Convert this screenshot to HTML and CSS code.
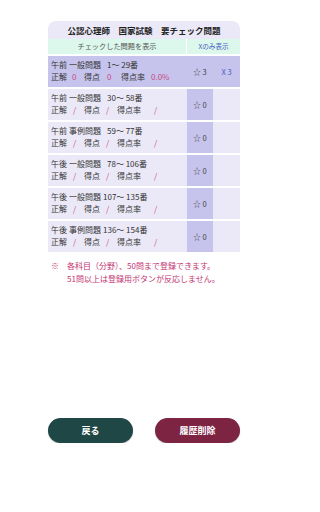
FILE: index.html
```html
<!DOCTYPE html>
<html lang="ja">
<head>
<meta charset="utf-8">
<link rel="stylesheet" href="styles.css">
</head>
<body>
<div class="screen">
<div class="page">
  <div class="card">
    <div class="title">公認心理師　国家試験　要チェック問題</div>
    <div class="head">
      <div class="head-main">チェックした問題を表示</div>
      <div class="head-x">Xのみ表示</div>
    </div>
    <div class="row active">
      <div class="main">
        <div class="l1"><span class="w1">午前</span><span class="w2">一般問題</span><span class="rng">1〜 29番</span></div>
        <div class="l2 done"><span class="a">正解</span><span class="b v">0</span><span class="c">得点</span><span class="d v">0</span><span class="e">得点率</span><span class="v">0.0%</span></div>
      </div>
      <div class="star">☆&nbsp;3</div>
      <div class="xc">X&nbsp;3</div>
    </div>
    <div class="row">
      <div class="main">
        <div class="l1"><span class="w1">午前</span><span class="w2">一般問題</span><span class="rng">30〜 58番</span></div>
        <div class="l2"><span class="a">正解</span><span class="b v">/</span><span class="c">得点</span><span class="d v">/</span><span class="e">得点率</span><span class="v">/</span></div>
      </div>
      <div class="star">☆&nbsp;0</div>
      <div class="xc"></div>
    </div>
    <div class="row">
      <div class="main">
        <div class="l1"><span class="w1">午前</span><span class="w2">事例問題</span><span class="rng">59〜 77番</span></div>
        <div class="l2"><span class="a">正解</span><span class="b v">/</span><span class="c">得点</span><span class="d v">/</span><span class="e">得点率</span><span class="v">/</span></div>
      </div>
      <div class="star">☆&nbsp;0</div>
      <div class="xc"></div>
    </div>
    <div class="row">
      <div class="main">
        <div class="l1"><span class="w1">午後</span><span class="w2">一般問題</span><span class="rng">78〜 106番</span></div>
        <div class="l2"><span class="a">正解</span><span class="b v">/</span><span class="c">得点</span><span class="d v">/</span><span class="e">得点率</span><span class="v">/</span></div>
      </div>
      <div class="star">☆&nbsp;0</div>
      <div class="xc"></div>
    </div>
    <div class="row">
      <div class="main">
        <div class="l1"><span class="w1">午後</span><span class="w2">一般問題</span><span class="rng tight">107〜 135番</span></div>
        <div class="l2"><span class="a">正解</span><span class="b v">/</span><span class="c">得点</span><span class="d v">/</span><span class="e">得点率</span><span class="v">/</span></div>
      </div>
      <div class="star">☆&nbsp;0</div>
      <div class="xc"></div>
    </div>
    <div class="row">
      <div class="main">
        <div class="l1"><span class="w1">午後</span><span class="w2">事例問題</span><span class="rng tight">136〜 154番</span></div>
        <div class="l2"><span class="a">正解</span><span class="b v">/</span><span class="c">得点</span><span class="d v">/</span><span class="e">得点率</span><span class="v">/</span></div>
      </div>
      <div class="star">☆&nbsp;0</div>
      <div class="xc"></div>
    </div>
  </div>
  <div class="note">
    <div class="nl"><span class="mark">※</span><span>各科目（分野）、50問まで登録できます。</span></div>
    <div class="nl"><span class="mark"></span><span>51問以上は登録用ボタンが反応しません。</span></div>
  </div>
  <div class="buttons">
    <button class="btn back">戻る</button>
    <button class="btn del">履歴削除</button>
  </div>
</div>
</div>
</body>
</html>
```
FILE: styles.css
```css
html, body {
  margin: 0;
  padding: 0;
  background: #ffffff;
}
body {
  font-family: "Noto Sans CJK JP", "Noto Sans", sans-serif;
  color: #333333;
}
.screen {
  width: 288px;
}
.page {
  width: 192px;
  margin: 0 auto;
  padding-top: 21px;
}
.card {
  display: flex;
  flex-direction: column;
  gap: 2px;
}
.title {
  background: #ebe9f8;
  border-radius: 8px 8px 0 0;
  height: 18px;
  line-height: 18px;
  text-align: center;
  font-size: 8.5px;
  font-weight: bold;
  color: #222;
  margin-bottom: -2px;
}
.head {
  display: flex;
  height: 15px;
  line-height: 15px;
  gap: 1px;
  color: #555;
}
.head-main {
  width: 138px;
  background: #dcf7ec;
  text-align: center;
  font-size: 7.2px;
}
.head-x {
  flex: 1;
  background: #dcf7ec;
  text-align: center;
  font-size: 6.6px;
  color: #4b5fc0;
}
.row {
  display: flex;
  height: 31px;
  background: #ebe9f8;
}
.row.active {
  background: #c6c4ec;
}
.main {
  width: 139px;
  padding-left: 3px;
  padding-top: 3px;
  box-sizing: border-box;
  font-size: 8px;
  line-height: 12px;
  white-space: nowrap;
}
.l1 .w1 {
  margin-right: 2px;
}
.rng {
  margin-left: 6px;
}
.rng.tight {
  margin-left: 2px;
}
.l2 span {
  display: inline-block;
}
.l2 .a { width: 22px; }
.l2 .b { width: 11px; }
.l2 .c { width: 22px; }
.l2 .d { width: 11px; }
.l2 .e { width: 37px; }
.l2.done .a { width: 21px; }
.l2.done .b { width: 12px; }
.l2.done .c { width: 23px; }
.l2.done .d { width: 14px; }
.l2.done .e { width: 30px; }
.l2 .v {
  color: #c94a86;
}
.star {
  width: 26px;
  background: #c6c4ec;
  font-size: 7.5px;
  color: #444;
  display: flex;
  align-items: center;
  justify-content: center;
}
.xc {
  flex: 1;
  font-size: 7.5px;
  color: #4b5fc0;
  display: flex;
  align-items: center;
  justify-content: center;
}
.note {
  margin-top: 7px;
  padding-left: 3px;
  font-size: 8px;
  line-height: 13px;
  color: #c2336f;
}
.nl {
  display: flex;
}
.mark {
  width: 16px;
  flex: none;
}
.buttons {
  display: flex;
  justify-content: space-between;
  margin-top: 133px;
}
.btn {
  width: 85px;
  height: 25px;
  border: none;
  border-radius: 13px;
  color: #ffffff;
  font-family: "Noto Sans CJK JP", sans-serif;
  font-size: 9px;
  font-weight: bold;
  padding: 0;
  box-shadow: 0 1px 1px rgba(0,0,0,0.25);
}
.back {
  background: #1f4745;
}
.del {
  background: #7c2442;
}
```
